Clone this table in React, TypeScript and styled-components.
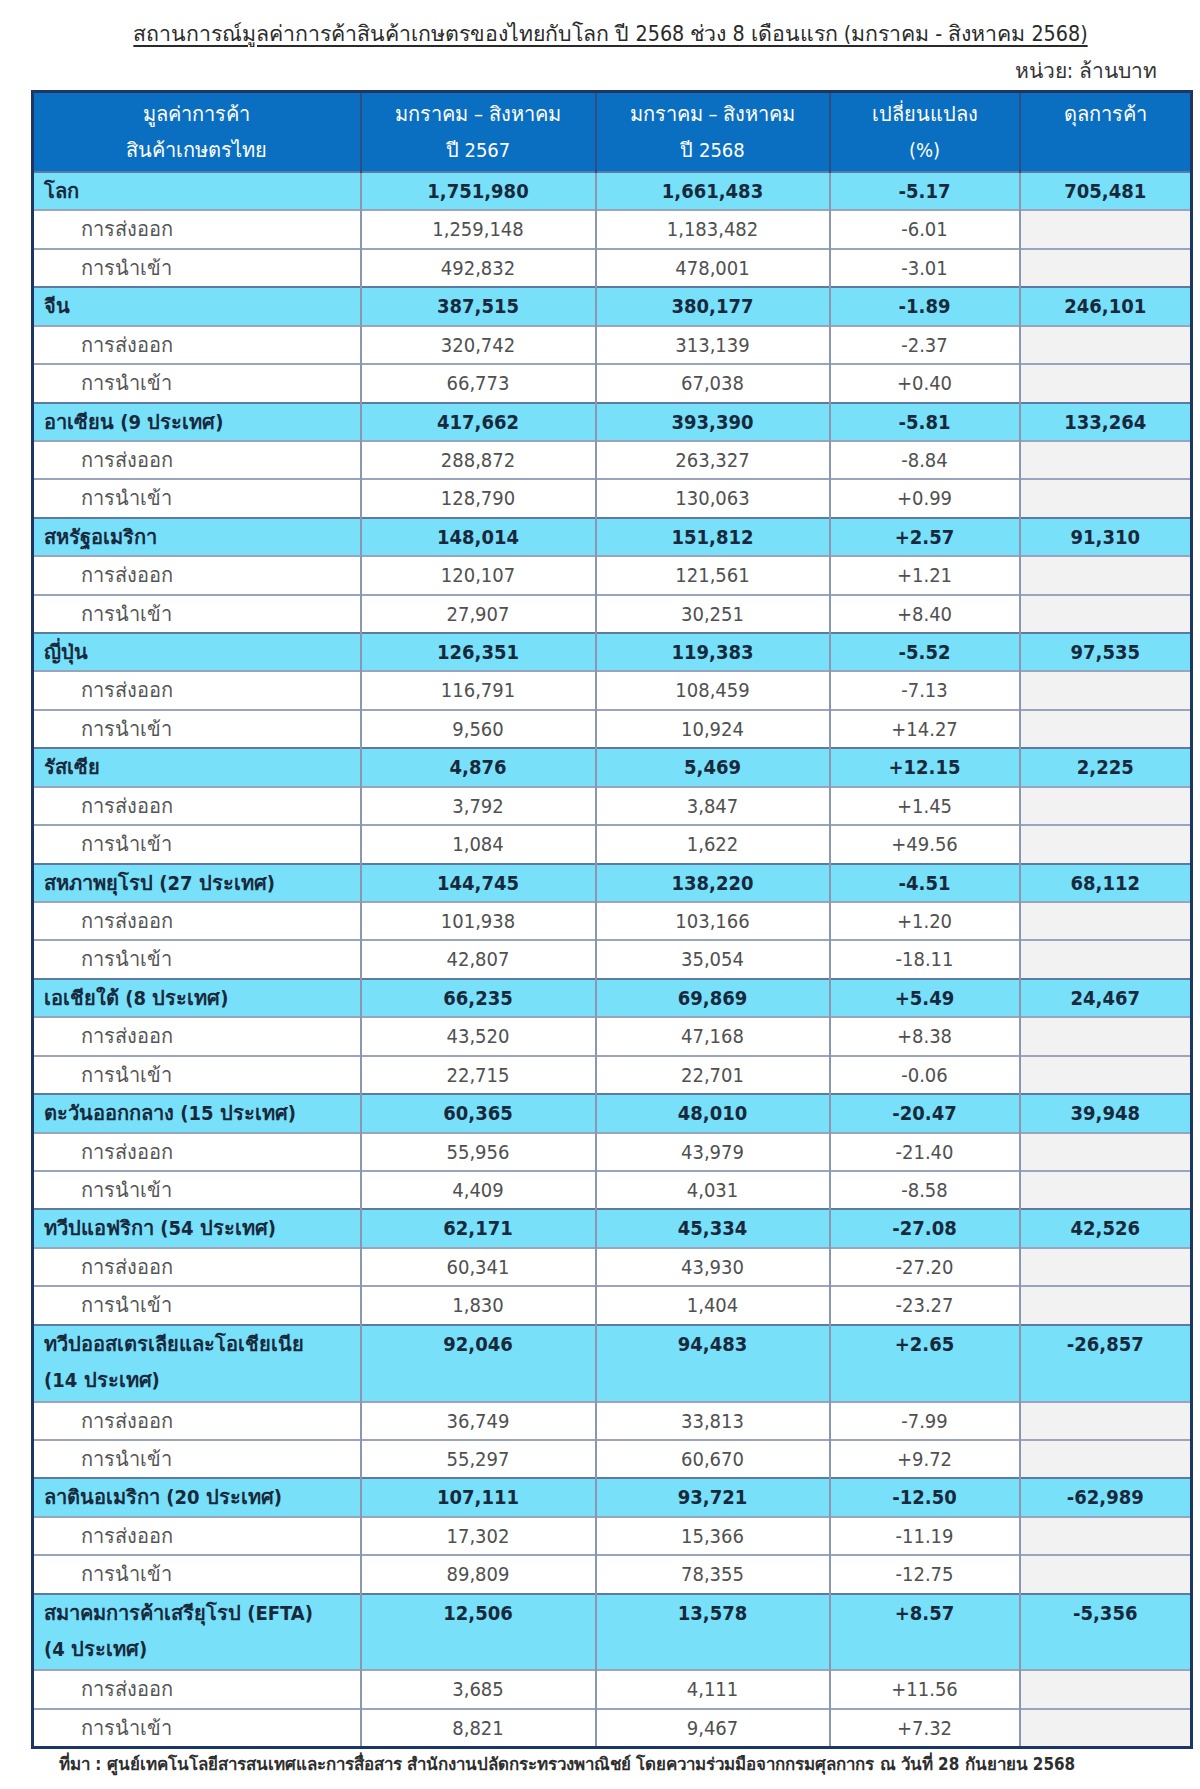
import React from "react";
import styled, { createGlobalStyle } from "styled-components";

const Global = createGlobalStyle`
  html, body { margin: 0; padding: 0; background: #ffffff; }
  body { font-family: "DejaVu Sans", "Noto Sans", sans-serif; }
`;

const Page = styled.div`
  width: 1200px;
  padding: 16px 0 20px 31px;
  box-sizing: border-box;
`;

const Inner = styled.div`
  width: 1159px;
  display: flex;
  flex-direction: column;
`;

const Title = styled.h1`
  margin: 0;
  text-align: center;
  font-size: 21.3px;
  font-weight: normal;
  text-decoration: underline;
  text-underline-offset: 4px;
  color: #2a2a2a;
  line-height: 36px;
  font-stretch: condensed;
`;

const Unit = styled.div`
  text-align: right;
  padding-right: 33px;
  font-size: 21px;
  color: #333;
  line-height: 38px;
  font-stretch: condensed;
`;

const Table = styled.table`
  width: 1159px;
  border-collapse: collapse;
  table-layout: fixed;
  border: 3px solid #1c3764;
  font-stretch: condensed;
`;

const HeadCell = styled.th`
  background: #0b6fc1;
  color: #ffffff;
  font-weight: normal;
  font-size: 20px;
  line-height: 36px;
  padding: 3px 4px 3px;
  vertical-align: top;
  text-align: center;
  border-left: 2px solid #2b4f85;
`;

const Row = styled.tr<{ $group?: boolean }>`
  background: ${(p) => (p.$group ? "#79e0f9" : "#ffffff")};
`;

const Cell = styled.td<{ $group?: boolean; $blank?: boolean; $tall?: boolean }>`
  font-size: 20px;
  line-height: 36.42px;
  padding: 0 4px ${(p) => (p.$tall ? "2px" : "0")};
  text-align: center;
  vertical-align: top;
  white-space: nowrap;
  color: ${(p) => (p.$group ? "#172a3d" : "#505050")};
  font-weight: ${(p) => (p.$group ? "bold" : "normal")};
  background: ${(p) => (p.$blank ? "#f2f2f2" : "transparent")};
  border-top: 2px solid ${(p) => (p.$group ? "#5d7aa3" : "#9aa5bd")};
  border-left: 2px solid #8b97b2;
`;

const LabelCell = styled(Cell)<{ $group?: boolean }>`
  text-align: left;
  padding-left: ${(p) => (p.$group ? "10px" : "47px")};
  color: ${(p) => (p.$group ? "#172a3d" : "#555555")};
`;

const Footer = styled.div`
  margin-top: 3px;
  padding-left: 28px;
  font-size: 16.9px;
  font-weight: bold;
  color: #2e2e2e;
  line-height: 24px;
  font-stretch: condensed;
`;

type Line = [string, string, string];
type Group = {
  name: React.ReactNode;
  tall?: boolean;
  total: [string, string, string, string];
  exp: Line;
  imp: Line;
};

const groups: Group[] = [
  { name: "โลก", total: ["1,751,980", "1,661,483", "-5.17", "705,481"], exp: ["1,259,148", "1,183,482", "-6.01"], imp: ["492,832", "478,001", "-3.01"] },
  { name: "จีน", total: ["387,515", "380,177", "-1.89", "246,101"], exp: ["320,742", "313,139", "-2.37"], imp: ["66,773", "67,038", "+0.40"] },
  { name: "อาเซียน (9 ประเทศ)", total: ["417,662", "393,390", "-5.81", "133,264"], exp: ["288,872", "263,327", "-8.84"], imp: ["128,790", "130,063", "+0.99"] },
  { name: "สหรัฐอเมริกา", total: ["148,014", "151,812", "+2.57", "91,310"], exp: ["120,107", "121,561", "+1.21"], imp: ["27,907", "30,251", "+8.40"] },
  { name: "ญี่ปุ่น", total: ["126,351", "119,383", "-5.52", "97,535"], exp: ["116,791", "108,459", "-7.13"], imp: ["9,560", "10,924", "+14.27"] },
  { name: "รัสเซีย", total: ["4,876", "5,469", "+12.15", "2,225"], exp: ["3,792", "3,847", "+1.45"], imp: ["1,084", "1,622", "+49.56"] },
  { name: "สหภาพยุโรป (27 ประเทศ)", total: ["144,745", "138,220", "-4.51", "68,112"], exp: ["101,938", "103,166", "+1.20"], imp: ["42,807", "35,054", "-18.11"] },
  { name: "เอเชียใต้ (8 ประเทศ)", total: ["66,235", "69,869", "+5.49", "24,467"], exp: ["43,520", "47,168", "+8.38"], imp: ["22,715", "22,701", "-0.06"] },
  { name: "ตะวันออกกลาง (15 ประเทศ)", total: ["60,365", "48,010", "-20.47", "39,948"], exp: ["55,956", "43,979", "-21.40"], imp: ["4,409", "4,031", "-8.58"] },
  { name: "ทวีปแอฟริกา (54 ประเทศ)", total: ["62,171", "45,334", "-27.08", "42,526"], exp: ["60,341", "43,930", "-27.20"], imp: ["1,830", "1,404", "-23.27"] },
  { name: <>ทวีปออสเตรเลียและโอเชียเนีย<br />(14 ประเทศ)</>, tall: true, total: ["92,046", "94,483", "+2.65", "-26,857"], exp: ["36,749", "33,813", "-7.99"], imp: ["55,297", "60,670", "+9.72"] },
  { name: "ลาตินอเมริกา (20 ประเทศ)", total: ["107,111", "93,721", "-12.50", "-62,989"], exp: ["17,302", "15,366", "-11.19"], imp: ["89,809", "78,355", "-12.75"] },
  { name: <>สมาคมการค้าเสรียุโรป (EFTA)<br />(4 ประเทศ)</>, tall: true, total: ["12,506", "13,578", "+8.57", "-5,356"], exp: ["3,685", "4,111", "+11.56"], imp: ["8,821", "9,467", "+7.32"] },
];

function SubRow({ label, values }: { label: string; values: Line }) {
  return (
    <Row>
      <LabelCell>{label}</LabelCell>
      {values.map((v, i) => (
        <Cell key={i}>{v}</Cell>
      ))}
      <Cell $blank />
    </Row>
  );
}

export default function App() {
  return (
    <Page>
      <Global />
      <Inner>
        <Title>สถานการณ์มูลค่าการค้าสินค้าเกษตรของไทยกับโลก ปี 2568 ช่วง 8 เดือนแรก (มกราคม - สิงหาคม 2568)</Title>
        <Unit>หน่วย: ล้านบาท</Unit>
        <Table>
          <colgroup>
            <col style={{ width: 328 }} />
            <col style={{ width: 235 }} />
            <col style={{ width: 234 }} />
            <col style={{ width: 190 }} />
            <col style={{ width: 172 }} />
          </colgroup>
          <thead>
            <tr>
              <HeadCell>มูลค่าการค้า<br />สินค้าเกษตรไทย</HeadCell>
              <HeadCell>มกราคม – สิงหาคม<br />ปี 2567</HeadCell>
              <HeadCell>มกราคม – สิงหาคม<br />ปี 2568</HeadCell>
              <HeadCell>เปลี่ยนแปลง<br />(%)</HeadCell>
              <HeadCell>ดุลการค้า</HeadCell>
            </tr>
          </thead>
          <tbody>
            {groups.map((g, gi) => (
              <React.Fragment key={gi}>
                <Row $group>
                  <LabelCell $group $tall={g.tall}>{g.name}</LabelCell>
                  {g.total.map((v, i) => (
                    <Cell key={i} $group $tall={g.tall}>{v}</Cell>
                  ))}
                </Row>
                <SubRow label="การส่งออก" values={g.exp} />
                <SubRow label="การนำเข้า" values={g.imp} />
              </React.Fragment>
            ))}
          </tbody>
        </Table>
        <Footer>ที่มา : ศูนย์เทคโนโลยีสารสนเทศและการสื่อสาร สำนักงานปลัดกระทรวงพาณิชย์ โดยความร่วมมือจากกรมศุลกากร ณ วันที่ 28 กันยายน 2568</Footer>
      </Inner>
    </Page>
  );
}
